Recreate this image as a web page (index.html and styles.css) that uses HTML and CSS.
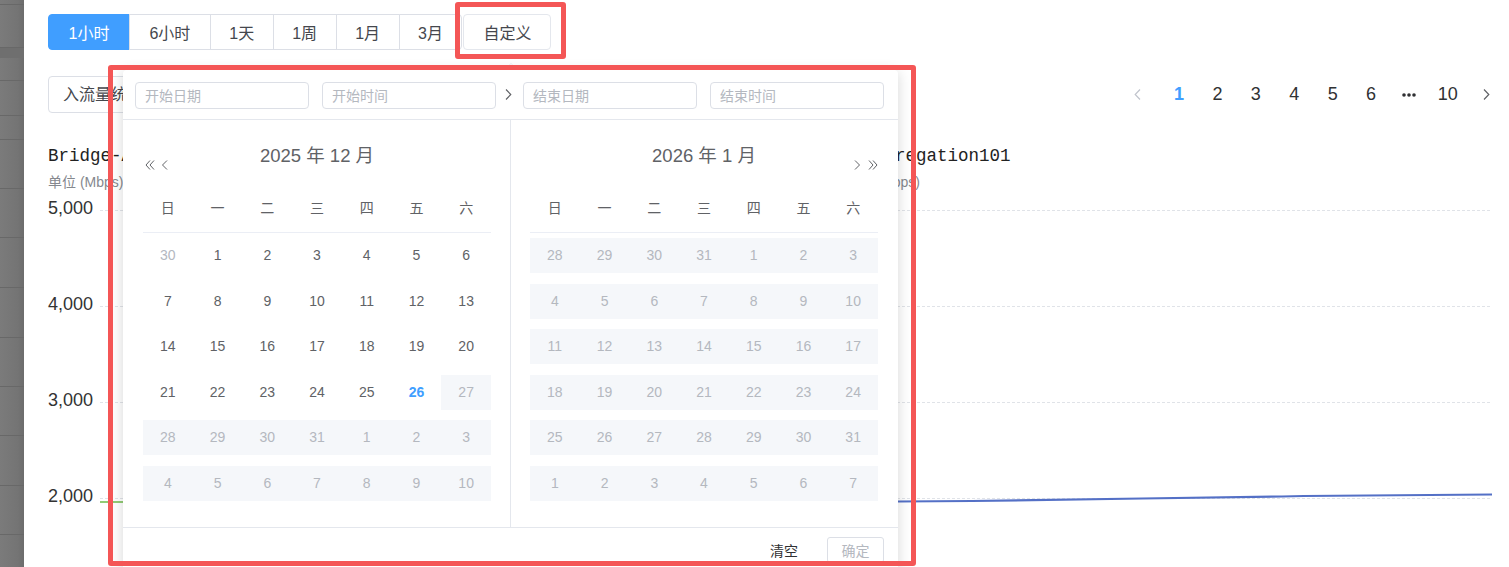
FILE: index.html
```html
<!DOCTYPE html>
<html lang="zh-CN">
<head>
<meta charset="utf-8">
<title>流量监控</title>
<link rel="stylesheet" href="styles.css">
</head>
<body>
<div class="app">
  <aside class="side">
    <div class="side-item s1"></div>
    <div class="side-item s2"></div>
    <div class="side-band"></div>
    <div class="side-item s3"></div>
    <div class="side-item s4"></div>
    <div class="side-item s5"></div>
    <div class="side-item s6"></div>
    <div class="side-item s6"></div>
    <div class="side-item s7"></div>
    <div class="side-item s7"></div>
    <div class="side-item s6"></div>
    <div class="side-item s6"></div>
    <div class="side-item s7"></div>
    <div class="side-item s6"></div>
  </aside>

  <main class="main">
    <div class="toolbar">
      <div class="range-group">
        <button class="range wide active">1小时</button>
        <button class="range wide">6小时</button>
        <button class="range">1天</button>
        <button class="range">1周</button>
        <button class="range">1月</button>
        <button class="range last">3月</button>
      </div>
      <button class="range custom">自定义</button>
    </div>

    <div class="filter-row">
      <div class="select">入流量统计</div>
      <nav class="pager">
        <span class="pg-item pg-prev"><svg width="7" height="11" viewBox="0 0 7 11"><polyline points="6,0.5 1.2,5.5 6,10.5" fill="none" stroke="#c0c4cc" stroke-width="1.2"/></svg></span>
        <span class="pg-item on">1</span>
        <span class="pg-item">2</span>
        <span class="pg-item">3</span>
        <span class="pg-item">4</span>
        <span class="pg-item">5</span>
        <span class="pg-item">6</span>
        <span class="pg-item"><svg width="14" height="4" viewBox="0 0 14 4"><circle cx="2" cy="2" r="1.8" fill="#303133"/><circle cx="7" cy="2" r="1.8" fill="#303133"/><circle cx="12" cy="2" r="1.8" fill="#303133"/></svg></span>
        <span class="pg-item">10</span>
        <span class="pg-item pg-next"><svg width="7" height="11" viewBox="0 0 7 11"><polyline points="1,0.5 5.8,5.5 1,10.5" fill="none" stroke="#606266" stroke-width="1.2"/></svg></span>
      </nav>
    </div>

    <section class="charts">
      <article class="chart">
        <h3 class="chart-title">Bridge-Aggregation100</h3>
        <div class="chart-unit">单位 (Mbps)</div>
        <div class="plot">
          <div class="axis-row"><span class="ylab">5,000</span><span class="gline"></span></div>
          <div class="axis-row"><span class="ylab">4,000</span><span class="gline"></span></div>
          <div class="axis-row"><span class="ylab">3,000</span><span class="gline"></span></div>
          <div class="axis-row"><span class="ylab">2,000</span><span class="gline"></span></div>
          <svg class="series" viewBox="0 0 648 400" preserveAspectRatio="none">
            <polyline points="0,311 120,311 260,310 400,309 520,308 648,307" fill="none" stroke="#91cc75" stroke-width="2" vector-effect="non-scaling-stroke"/>
          </svg>
        </div>
      </article>
      <article class="chart">
        <h3 class="chart-title">Bridge-Aggregation101</h3>
        <div class="chart-unit">入流量 · 单位 (Mbps)</div>
        <div class="plot">
          <div class="axis-row"><span class="ylab">5,000</span><span class="gline"></span></div>
          <div class="axis-row"><span class="ylab">4,000</span><span class="gline"></span></div>
          <div class="axis-row"><span class="ylab">3,000</span><span class="gline"></span></div>
          <div class="axis-row"><span class="ylab">2,000</span><span class="gline"></span></div>
          <svg class="series" viewBox="0 0 648 400" preserveAspectRatio="none">
            <polyline points="0,311 56,310.5 130,310 300,307.5 440,305.5 462,305 650,303.5" fill="none" stroke="#5470c6" stroke-width="2.2" vector-effect="non-scaling-stroke"/>
          </svg>
        </div>
      </article>
    </section>
  </main>
</div>

<div class="picker">
  <span class="picker-arrow"></span>
  <div class="picker-head">
    <input class="field" type="text" placeholder="开始日期" readonly>
    <input class="field gap" type="text" placeholder="开始时间" readonly>
    <span class="sep"><svg width="7" height="11" viewBox="0 0 7 11"><polyline points="1,0.5 5.8,5.5 1,10.5" fill="none" stroke="#606266" stroke-width="1.1"/></svg></span>
    <input class="field" type="text" placeholder="结束日期" readonly>
    <input class="field gap" type="text" placeholder="结束时间" readonly>
  </div>
  <div class="picker-body">
    <div class="cal cal-left">
      <div class="cal-head">
        <div class="cal-nav">
          <svg width="10" height="10" viewBox="0 0 10 10"><polyline points="5,0.5 1,5 5,9.5" fill="none" stroke="#606266" stroke-width="1"/><polyline points="9,0.5 5,5 9,9.5" fill="none" stroke="#606266" stroke-width="1"/></svg>
          <svg width="7" height="10" viewBox="0 0 7 10"><polyline points="6,0.5 1.5,5 6,9.5" fill="none" stroke="#606266" stroke-width="1"/></svg>
        </div>
        <div class="cal-title">2025 年 12 月</div>
        <div class="cal-nav end"></div>
      </div>
      <div class="cal-week"><span>日</span><span>一</span><span>二</span><span>三</span><span>四</span><span>五</span><span>六</span></div>
      <div class="cal-grid">
        <span class="d prev">30</span><span class="d">1</span><span class="d">2</span><span class="d">3</span><span class="d">4</span><span class="d">5</span><span class="d">6</span>
        <span class="d">7</span><span class="d">8</span><span class="d">9</span><span class="d">10</span><span class="d">11</span><span class="d">12</span><span class="d">13</span>
        <span class="d">14</span><span class="d">15</span><span class="d">16</span><span class="d">17</span><span class="d">18</span><span class="d">19</span><span class="d">20</span>
        <span class="d">21</span><span class="d">22</span><span class="d">23</span><span class="d">24</span><span class="d">25</span><span class="d today">26</span><span class="d dis">27</span>
        <span class="d dis">28</span><span class="d dis">29</span><span class="d dis">30</span><span class="d dis">31</span><span class="d dis">1</span><span class="d dis">2</span><span class="d dis">3</span>
        <span class="d dis">4</span><span class="d dis">5</span><span class="d dis">6</span><span class="d dis">7</span><span class="d dis">8</span><span class="d dis">9</span><span class="d dis">10</span>
      </div>
    </div>
    <div class="cal cal-right">
      <div class="cal-head">
        <div class="cal-nav"></div>
        <div class="cal-title">2026 年 1 月</div>
        <div class="cal-nav end">
          <svg width="7" height="10" viewBox="0 0 7 10"><polyline points="1,0.5 5.5,5 1,9.5" fill="none" stroke="#606266" stroke-width="1"/></svg>
          <svg width="10" height="10" viewBox="0 0 10 10"><polyline points="1,0.5 5,5 1,9.5" fill="none" stroke="#606266" stroke-width="1"/><polyline points="5,0.5 9,5 5,9.5" fill="none" stroke="#606266" stroke-width="1"/></svg>
        </div>
      </div>
      <div class="cal-week"><span>日</span><span>一</span><span>二</span><span>三</span><span>四</span><span>五</span><span>六</span></div>
      <div class="cal-grid">
        <span class="d dis">28</span><span class="d dis">29</span><span class="d dis">30</span><span class="d dis">31</span><span class="d dis">1</span><span class="d dis">2</span><span class="d dis">3</span>
        <span class="d dis">4</span><span class="d dis">5</span><span class="d dis">6</span><span class="d dis">7</span><span class="d dis">8</span><span class="d dis">9</span><span class="d dis">10</span>
        <span class="d dis">11</span><span class="d dis">12</span><span class="d dis">13</span><span class="d dis">14</span><span class="d dis">15</span><span class="d dis">16</span><span class="d dis">17</span>
        <span class="d dis">18</span><span class="d dis">19</span><span class="d dis">20</span><span class="d dis">21</span><span class="d dis">22</span><span class="d dis">23</span><span class="d dis">24</span>
        <span class="d dis">25</span><span class="d dis">26</span><span class="d dis">27</span><span class="d dis">28</span><span class="d dis">29</span><span class="d dis">30</span><span class="d dis">31</span>
        <span class="d dis">1</span><span class="d dis">2</span><span class="d dis">3</span><span class="d dis">4</span><span class="d dis">5</span><span class="d dis">6</span><span class="d dis">7</span>
      </div>
    </div>
  </div>
  <div class="picker-foot">
    <button class="btn-text">清空</button>
    <button class="btn-ok">确定</button>
  </div>
</div>

<div class="mark mark-btn"></div>
<div class="mark mark-panel"></div>
</body>
</html>
```

FILE: styles.css
```css
* { box-sizing: border-box; margin: 0; padding: 0; }

body {
  width: 1509px;
  height: 567px;
  overflow: hidden;
  position: relative;
  background: #fff;
  color: #606266;
  font-family: "Liberation Sans", "Noto Sans CJK SC", sans-serif;
}

button, input { font-family: inherit; }

.app { display: flex; height: 567px; }

/* masked sidebar */
.side {
  width: 24px;
  flex: none;
  display: flex;
  flex-direction: column;
  background: linear-gradient(90deg, #7b7b7b, #747474 75%, #6c6c6c);
}
.side-item { border-bottom: 1px solid #686868; flex: none; }
.s1 { height: 5px; }
.s2 { height: 43px; }
.side-band { height: 10px; background: #6f6f6f; flex: none; }
.s3 { height: 23px; }
.s4 { height: 35px; }
.s5 { height: 24px; }
.s6 { height: 49px; }
.s7 { height: 50px; }

.main {
  flex: 1;
  min-width: 0;
  padding: 14px 19px 0 24px;
}

/* range buttons */
.toolbar { display: flex; align-items: center; height: 36px; }
.range-group { display: flex; }
.range {
  height: 36px;
  padding: 0 18.5px;
  font-size: 16px;
  color: #45474d;
  background: #fff;
  border: 1px solid #dcdfe6;
  margin-left: -1px;
}
.range.wide { padding: 0 19.5px; }
.range-group .range:first-child { margin-left: 0; border-radius: 4px 0 0 4px; }
.range.last { border-radius: 0 4px 4px 0; }
.range.active { background: #409eff; border-color: #409eff; color: #fff; }
.range.custom { margin-left: 1px; border-radius: 4px; border-color: #e4e7ed; padding: 0 19px; }

/* filter row */
.filter-row {
  margin-top: 26px;
  margin-right: -15px;
  height: 37px;
  display: flex;
  align-items: center;
  justify-content: space-between;
}
.select {
  width: 170px;
  height: 37px;
  line-height: 35px;
  padding: 0 14px;
  border: 1px solid #dcdfe6;
  border-radius: 4px;
  font-size: 16px;
  color: #45474d;
}
.pager { display: flex; align-items: center; font-size: 18px; color: #303133; }
.pg-item {
  width: 38.4px;
  height: 32px;
  display: flex;
  align-items: center;
  justify-content: center;
}
.pg-item.on { color: #409eff; font-weight: bold; }
.pg-prev { width: 38px; margin-right: 3px; }
.pg-next { width: 38px; }

/* charts */
.charts {
  margin-top: 31px;
  display: grid;
  grid-template-columns: 1fr 1fr;
  column-gap: 42px;
}
.chart { min-width: 0; }
.chart-title {
  font-family: "Liberation Mono", monospace;
  font-weight: normal;
  font-size: 17.5px;
  line-height: 24px;
  color: #222;
  white-space: nowrap;
}
.chart-unit {
  margin-top: 5px;
  font-size: 14px;
  line-height: 18px;
  color: #85888e;
  white-space: nowrap;
}
.plot {
  position: relative;
  padding-top: 7px;
  display: flex;
  flex-direction: column;
  gap: 76px;
}
.axis-row { display: flex; align-items: center; height: 20px; }
.ylab {
  width: 52px;
  padding-right: 7px;
  text-align: right;
  font-size: 18px;
  line-height: 20px;
  color: #333;
  flex: none;
}
.gline {
  flex: 1;
  height: 0;
  margin-top: 4px;
  border-top: 1px dashed #e0e3e8;
}
.series {
  position: absolute;
  left: 52px;
  top: 0;
  width: calc(100% - 52px);
  height: 400px;
  overflow: visible;
}

/* date range picker */
.picker {
  position: absolute;
  left: 123px;
  top: 70px;
  width: 775px;
  background: #fff;
  border-radius: 4px;
  box-shadow: 0 2px 14px rgba(0, 0, 0, 0.16);
  font-size: 14px;
  z-index: 5;
}
.picker-arrow {
  position: absolute;
  top: -6px;
  left: 382px;
  width: 0;
  height: 0;
  border-left: 6px solid transparent;
  border-right: 6px solid transparent;
  border-bottom: 6px solid #fff;
  filter: drop-shadow(0 -1px 0 #e4e7ed);
}
.picker-head {
  display: flex;
  align-items: center;
  padding: 12px 13px 10px 12px;
  border-bottom: 1px solid #e4e7ed;
}
.field {
  width: 174px;
  height: 27px;
  padding: 0 9px;
  border: 1px solid #dcdfe6;
  border-radius: 4px;
  font-size: 14px;
  color: #606266;
  outline: none;
  background: #fff;
}
.field::placeholder { color: #b4b8bf; }
.field.gap { margin-left: 13px; }
.sep {
  width: 27px;
  display: flex;
  justify-content: center;
  padding-right: 2px;
  margin-top: -2px;
}

.picker-body { display: flex; }
.cal { padding-bottom: 26px; }
.cal-left { width: 388px; padding-left: 20px; padding-right: 19px; border-right: 1px solid #e4e7ed; }
.cal-right { width: 387px; padding-left: 19px; padding-right: 20px; }
.cal-head {
  margin-top: 24px;
  height: 24px;
  display: grid;
  grid-template-columns: 1fr auto 1fr;
}
.cal-nav {
  display: flex;
  align-items: flex-end;
  gap: 6px;
  padding-left: 2px;
  margin-bottom: -2px;
}
.cal-nav.end { justify-content: flex-end; padding-left: 0; gap: 7px; }
.cal-title { font-size: 18.5px; line-height: 24px; color: #606266; }
.cal-week {
  margin-top: 30px;
  display: grid;
  grid-template-columns: repeat(7, 1fr);
  line-height: 20px;
  padding-bottom: 14px;
  border-bottom: 1px solid #ebeef5;
  text-align: center;
  color: #606266;
}
.cal-grid {
  margin-top: 5px;
  display: grid;
  grid-template-columns: repeat(7, 1fr);
  row-gap: 10.6px;
}
.d { height: 35px; line-height: 35px; text-align: center; color: #606266; }
.d.prev { color: #b4b8bf; }
.d.dis { color: #b4b8bf; background: #f5f7fa; }
.d.today { color: #409eff; font-weight: bold; }

.picker-foot {
  border-top: 1px solid #e4e7ed;
  padding: 9px 14px 10px;
  display: flex;
  justify-content: flex-end;
  align-items: center;
  gap: 29px;
}
.btn-text { border: 0; background: none; font-size: 14px; color: #303133; }
.btn-ok {
  width: 57px;
  height: 26px;
  border: 1px solid #dcdfe6;
  border-radius: 3px;
  background: #fff;
  color: #b4b8bf;
  font-size: 14px;
}

/* annotation highlights */
.mark {
  position: absolute;
  border: 5px solid #f45656;
  border-radius: 3px;
  z-index: 10;
  pointer-events: none;
}
.mark-btn { left: 455px; top: 2px; width: 111px; height: 57px; }
.mark-panel { left: 108px; top: 65px; width: 808px; height: 501px; }
```
